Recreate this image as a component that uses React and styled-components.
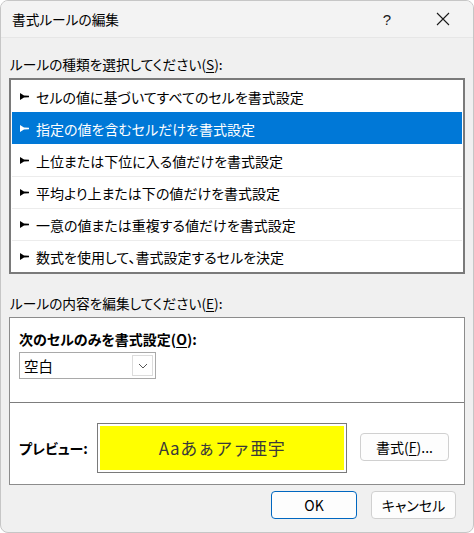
import React from "react";
import styled, { createGlobalStyle } from "styled-components";

const Global = createGlobalStyle`
  html, body { margin: 0; padding: 0; background: #ffffff; }
  body {
    font-family: "Noto Sans CJK JP", "Noto Sans", sans-serif;
    font-feature-settings: "palt";
    color: #000;
  }
`;

const Dialog = styled.div`
  box-sizing: border-box;
  width: 474px;
  height: 533px;
  background: #f0f0f0;
  border: 1px solid #c6c6c6;
  border-radius: 8px;
  overflow: hidden;
  display: flex;
  flex-direction: column;
`;

const TitleBar = styled.div`
  height: 36px;
  flex: none;
  display: flex;
  align-items: center;
  background: #f3f3f3;
  border-bottom: 1px solid #e6e6e6;
  padding: 0 2px 0 11px;
`;

const Title = styled.div`
  flex: 1;
  font-size: 13.7px;
  line-height: 20px;
`;

const CaptionButton = styled.div`
  width: 56px;
  height: 36px;
  display: flex;
  align-items: center;
  justify-content: center;
  font-family: "Liberation Sans", sans-serif;
  font-size: 15px;
  color: #1a1a1a;
`;

const Content = styled.div`
  padding: 16px 8px 0 8px;
  display: flex;
  flex-direction: column;
`;

const GroupLabel = styled.div`
  font-size: 13.7px;
  line-height: 20px;
  padding-left: 1px;
  margin-top: ${(p) => p.$top || 0}px;
  margin-bottom: 4px;
`;

const Key = styled.span`
  text-decoration: underline;
  text-underline-offset: 2px;
`;

const RuleList = styled.div`
  box-sizing: border-box;
  width: 456px;
  border: 2px solid #7a7a7a;
  background: #fff;
  padding: 0 1px;
`;

const RuleItem = styled.div`
  height: 32px;
  box-sizing: border-box;
  display: flex;
  align-items: center;
  padding-left: 8px;
  gap: 7px;
  font-size: 14px;
  background: ${(p) => (p.$selected ? "#0078d7" : "transparent")};
  color: ${(p) => (p.$selected ? "#ffffff" : "#000000")};
  border-top: 1px solid ${(p) => (p.$first || p.$selected || p.$afterSelected ? "transparent" : "#ececec")};
`;

const Marker = ({ color }) => (
  <svg width="9" height="7" viewBox="0 0 9 7">
    <path d="M0 0 L4 2.4 L9 2.8 L9 4.2 L4 4.6 L0 7 Z" fill={color} />
  </svg>
);

const Panel = styled.div`
  box-sizing: border-box;
  width: 456px;
  height: 168px;
  background: #fff;
  border: 1px solid #8c8c8c;
  display: flex;
  flex-direction: column;
`;

const PanelTop = styled.div`
  padding: 11px 9px 0 9px;
  height: 85px;
  box-sizing: border-box;
  border-bottom: 1px solid #7d7d7d;
`;

const BoldLabel = styled.div`
  font-size: 14px;
  line-height: 20px;
  font-weight: 700;
`;

const Select = styled.div`
  box-sizing: border-box;
  margin-top: 3px;
  width: 137px;
  height: 27px;
  border: 1px solid #a9a9a9;
  display: flex;
  align-items: center;
  justify-content: space-between;
  padding: 0 2px 0 4px;
  font-size: 14.5px;
`;

const DropButton = styled.div`
  box-sizing: border-box;
  width: 21px;
  height: 21px;
  border: 1px solid #dcdcdc;
  display: flex;
  align-items: center;
  justify-content: center;
`;

const PreviewRow = styled.div`
  flex: 1;
  display: flex;
  align-items: center;
  padding: 8px 15px 0 9px;
`;

const PreviewLabel = styled(BoldLabel)`
  width: 78px;
`;

const PreviewBox = styled.div`
  box-sizing: border-box;
  width: 250px;
  height: 50px;
  border: 1px solid #7a7a7a;
  padding: 2px;
  background: #fff;
`;

const PreviewFill = styled.div`
  height: 100%;
  background: #ffff00;
  display: flex;
  align-items: center;
  justify-content: center;
  font-size: 17px;
  letter-spacing: 0.5px;
  color: #3a3a3a;
  font-feature-settings: normal;
`;

const Button = styled.div`
  box-sizing: border-box;
  width: ${(p) => p.$w || 86}px;
  height: 28px;
  border-radius: 4px;
  background: #fdfdfd;
  border: 1px solid ${(p) => (p.$primary ? "#0067c0" : "#d0d0d0")};
  display: flex;
  align-items: center;
  justify-content: center;
  font-size: 14px;
`;

const FormatButton = styled(Button)`
  margin-left: auto;
  margin-top: -2px;
`;

const Footer = styled.div`
  display: flex;
  justify-content: flex-end;
  gap: 14px;
  padding: 6px 17px 0 0;
`;

const rules = [
  "セルの値に基づいてすべてのセルを書式設定",
  "指定の値を含むセルだけを書式設定",
  "上位または下位に入る値だけを書式設定",
  "平均より上または下の値だけを書式設定",
  "一意の値または重複する値だけを書式設定",
  "数式を使用して、書式設定するセルを決定",
];

export default function App() {
  const selected = 1;
  return (
    <>
      <Global />
      <Dialog>
        <TitleBar>
          <Title>書式ルールの編集</Title>
          <CaptionButton>?</CaptionButton>
          <CaptionButton>
            <svg width="14" height="14" viewBox="0 0 14 14">
              <path d="M1 1 L13 13 M13 1 L1 13" stroke="#1a1a1a" strokeWidth="1.1" />
            </svg>
          </CaptionButton>
        </TitleBar>
        <Content>
          <GroupLabel>
            ルールの種類を選択してください(<Key>S</Key>):
          </GroupLabel>
          <RuleList>
            {rules.map((r, i) => (
              <RuleItem
                key={r}
                $first={i === 0}
                $selected={i === selected}
                $afterSelected={i === selected + 1}
              >
                <Marker color={i === selected ? "#ffffff" : "#000000"} />
                {r}
              </RuleItem>
            ))}
          </RuleList>
          <GroupLabel $top={19}>
            ルールの内容を編集してください(<Key>E</Key>):
          </GroupLabel>
          <Panel>
            <PanelTop>
              <BoldLabel>
                次のセルのみを書式設定(<Key>O</Key>):
              </BoldLabel>
              <Select>
                空白
                <DropButton>
                  <svg width="10" height="6" viewBox="0 0 10 6">
                    <path d="M1 1 L5 5 L9 1" stroke="#555" strokeWidth="1" fill="none" />
                  </svg>
                </DropButton>
              </Select>
            </PanelTop>
            <PreviewRow>
              <PreviewLabel>プレビュー:</PreviewLabel>
              <PreviewBox>
                <PreviewFill>Aaあぁアァ亜宇</PreviewFill>
              </PreviewBox>
              <FormatButton $w={89}>
                書式(<Key>F</Key>)...
              </FormatButton>
            </PreviewRow>
          </Panel>
        </Content>
        <Footer>
          <Button $primary>OK</Button>
          <Button $w={85}>キャンセル</Button>
        </Footer>
      </Dialog>
    </>
  );
}
